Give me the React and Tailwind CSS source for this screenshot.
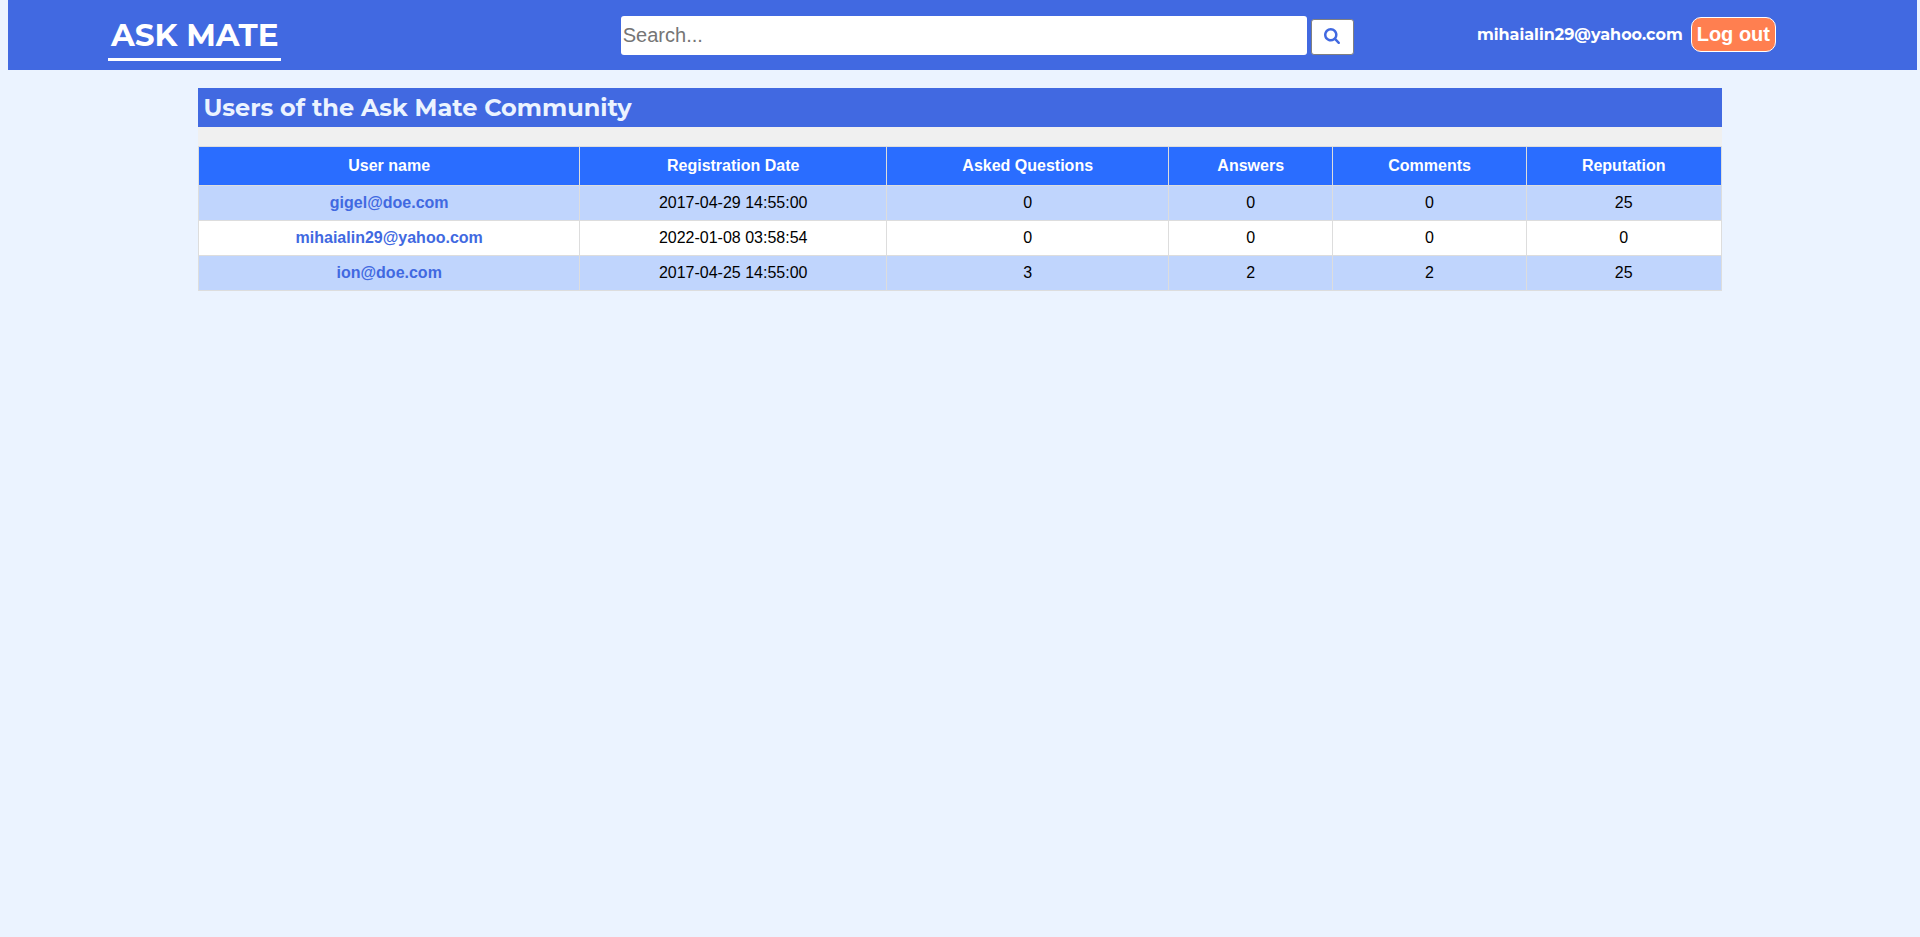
const columns = [
    { label: 'User name', width: 'w-[25%]' },
    { label: 'Registration Date', width: 'w-[20.2%]' },
    { label: 'Asked Questions', width: 'w-[18.5%]' },
    { label: 'Answers', width: 'w-[10.8%]' },
    { label: 'Comments', width: 'w-[12.7%]' },
    { label: 'Reputation', width: 'w-[12.8%]' },
]

const users = [
    {
        name: 'gigel@doe.com',
        registered: '2017-04-29 14:55:00',
        questions: 0,
        answers: 0,
        comments: 0,
        reputation: 25,
    },
    {
        name: 'mihaialin29@yahoo.com',
        registered: '2022-01-08 03:58:54',
        questions: 0,
        answers: 0,
        comments: 0,
        reputation: 0,
    },
    {
        name: 'ion@doe.com',
        registered: '2017-04-25 14:55:00',
        questions: 3,
        answers: 2,
        comments: 2,
        reputation: 25,
    },
]

function SearchIcon() {
    return (
        <svg
            className="size-4"
            viewBox="0 128 1664 1664"
            fill="currentColor"
            aria-hidden="true"
        >
            <path d="M1152 832q0-185-131.5-316.5t-316.5-131.5-316.5 131.5-131.5 316.5 131.5 316.5 316.5 131.5 316.5-131.5 131.5-316.5zm512 832q0 52-38 90t-90 38q-54 0-90-38l-343-342q-179 124-399 124-143 0-273.5-55.5t-225-150-150-225-55.5-273.5 55.5-273.5 150-225 225-150 273.5-55.5 273.5 55.5 225 150 150 225 55.5 273.5q0 220-124 399l343 343q37 37 37 90z" />
        </svg>
    )
}

function Header() {
    return (
        <header className="mr-[3px] ml-2 grid grid-cols-[32.1%_38.4%_1fr] bg-[#4169e1] pt-4 pb-[9px]">
            <div className="pl-25">
                <a
                    href="/"
                    className="inline-block border-b-3 border-white px-[3px] pb-1 font-['Montserrat','Inter',sans-serif] text-[31px] leading-[38px] font-bold text-white"
                >
                    ASK MATE
                </a>
            </div>

            <form className="flex items-start gap-1">
                <input
                    className="h-[39px] min-w-0 flex-1 rounded-[3px] bg-white px-0.5 text-xl placeholder:text-[#757575]"
                    type="text"
                    name="search"
                    aria-label="Search"
                    placeholder="Search..."
                />
                <button
                    type="submit"
                    aria-label="Submit search"
                    className="mt-[3px] flex h-9 w-[43px] items-center justify-center rounded-[3px] border border-[#808080] bg-white pb-0.5 text-[#4169e1]"
                >
                    <SearchIcon />
                </button>
            </form>

            <div className="flex items-start justify-end gap-2 pt-px pr-[141px]">
                <a
                    href="/user"
                    className="font-['Montserrat','Inter',sans-serif] text-base leading-[35px] font-bold text-white"
                >
                    mihaialin29@yahoo.com
                </a>
                <button
                    type="button"
                    className="h-[35px] rounded-[10px] border border-white bg-[#ff7f50] px-[5px] pb-0.5 text-xl leading-6 font-bold whitespace-nowrap text-white"
                >
                    Log out
                </button>
            </div>
        </header>
    )
}

function UsersTable() {
    return (
        <table className="w-full border-collapse text-center text-base leading-[18px]">
            <thead>
                <tr className="bg-[#2a6dff] text-white">
                    {columns.map((column) => (
                        <th
                            key={column.label}
                            className={`border border-[#dddddd] px-2 py-2.5 font-bold ${column.width}`}
                        >
                            {column.label}
                        </th>
                    ))}
                </tr>
            </thead>
            <tbody>
                {users.map((user) => (
                    <tr
                        key={user.name}
                        className="bg-white text-black odd:bg-[#c0d5fd]"
                    >
                        <td className="border border-[#dddddd] p-2">
                            <a
                                href="/user"
                                className="font-bold text-[#4169e1]"
                            >
                                {user.name}
                            </a>
                        </td>
                        <td className="border border-[#dddddd] p-2">
                            {user.registered}
                        </td>
                        <td className="border border-[#dddddd] p-2">
                            {user.questions}
                        </td>
                        <td className="border border-[#dddddd] p-2">
                            {user.answers}
                        </td>
                        <td className="border border-[#dddddd] p-2">
                            {user.comments}
                        </td>
                        <td className="border border-[#dddddd] p-2">
                            {user.reputation}
                        </td>
                    </tr>
                ))}
            </tbody>
        </table>
    )
}

function App() {
    return (
        <div className="min-h-screen bg-[#ebf3ff] font-['Liberation_Sans',Arial,sans-serif]">
            <Header />
            <div className="px-2 pt-[18px]">
                <main className="mx-auto w-4/5 bg-[#f0f0f0]">
                    <h1 className="mb-[19px] bg-[#4169e1] px-[5px] font-['Montserrat','Inter',sans-serif] text-2xl leading-[39px] font-bold text-[#ebf3ff]">
                        Users of the Ask Mate Community
                    </h1>
                    <UsersTable />
                </main>
            </div>
        </div>
    )
}

export default App
